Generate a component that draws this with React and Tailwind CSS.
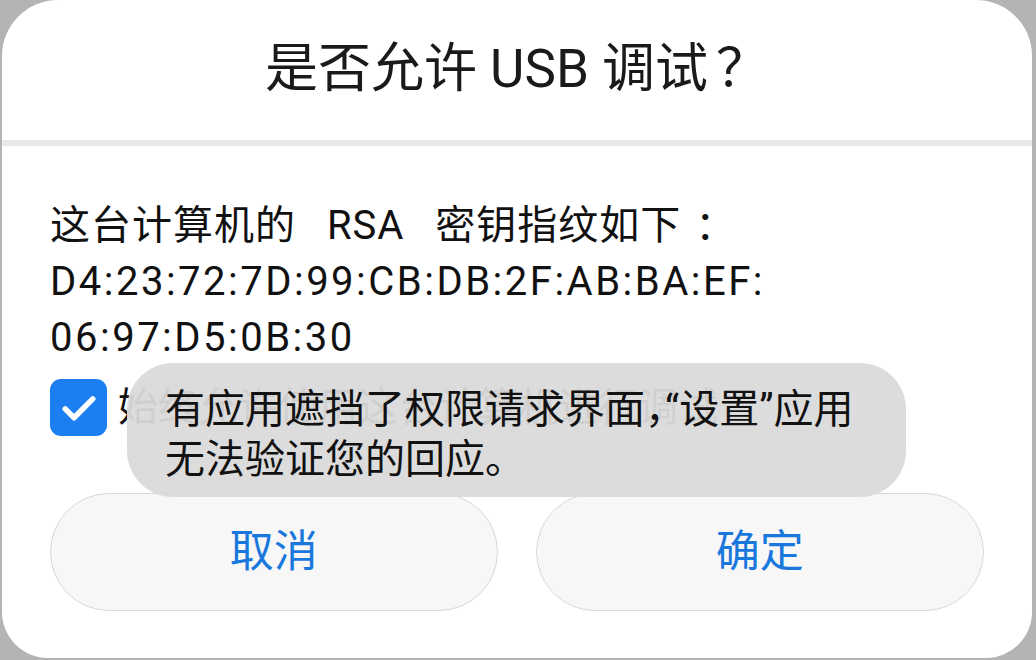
import React, { useState } from 'react';

const FONT = { fontFamily: 'Roboto, "Noto Sans CJK SC", sans-serif' };
const HALF = { fontFeatureSettings: '"halt"' };

const UsbDebugDialog = () => {
  const [alwaysAllow, setAlwaysAllow] = useState(true);

  return (
    <div className="w-[1036px] h-[660px] bg-[#b4b4b4] pl-[2px] pr-[4px] pb-[2px] overflow-hidden" style={FONT}>
      <div className="relative h-full bg-white rounded-t-[56px] rounded-b-[46px] flex flex-col">
        {/* title */}
        <div className="h-[140px] flex items-center justify-center text-[53px] text-[#1a1a1a]">
          是否允许 USB 调试<span className="ml-[8px]">？</span>
        </div>
        <div className="h-[6px] bg-[#e8e8e8]" />

        {/* body */}
        <div className="px-[48px] pt-[52px] text-[40px] leading-[56px] text-[#111]">
          <p className="tracking-[1px] [word-spacing:20px]">
            这台计算机的 RSA 密钥指纹如下<span className="ml-[14px]">：</span>
          </p>
          <p className="tracking-[2.5px]">D4:23:72:7D:99:CB:DB:2F:AB:BA:EF:</p>
          <p className="tracking-[2.5px]">06:97:D5:0B:30</p>

          <label className="mt-[13px] flex items-center gap-[11px] h-[57px]">
            <button
              onClick={() => setAlwaysAllow(!alwaysAllow)}
              className={`w-[57px] h-[57px] rounded-[11px] flex items-center justify-center ${alwaysAllow ? 'bg-[#1b7ff2]' : 'border-2 border-gray-400'}`}
            >
              {alwaysAllow && (
                <svg width="44" height="44" viewBox="0 0 24 24" fill="none" stroke="white" strokeWidth="3" strokeLinecap="round" strokeLinejoin="round">
                  <path d="M4.5 12.5l4.8 4.8L19.5 7" />
                </svg>
              )}
            </button>
            <span>始终允许使用这台计算机进行调试</span>
          </label>

          <div className="mt-[57px] flex gap-[38px]">
            <button className="w-[448px] h-[118px] rounded-full bg-[#f7f7f7] border border-[#d8d8d8] text-[44px] text-[#1a77dc]">
              取消
            </button>
            <button className="w-[449px] h-[118px] rounded-full bg-[#f7f7f7] border border-[#d8d8d8] text-[44px] text-[#1a77dc]">
              确定
            </button>
          </div>
        </div>

        {/* toast over the dialog */}
        <div className="absolute left-[125px] top-[363px] w-[779px] h-[134px] rounded-[46px] bg-[#dadada]/95 pl-[38px] pt-[22px] text-[40px] leading-[50px] text-[#111]">
          有应用遮挡了权限请求界面<span style={HALF}>，</span>“设置”应用
          <br />
          无法验证您的回应。
        </div>
      </div>
    </div>
  );
};

export default function App() {
  return <UsbDebugDialog />;
}
